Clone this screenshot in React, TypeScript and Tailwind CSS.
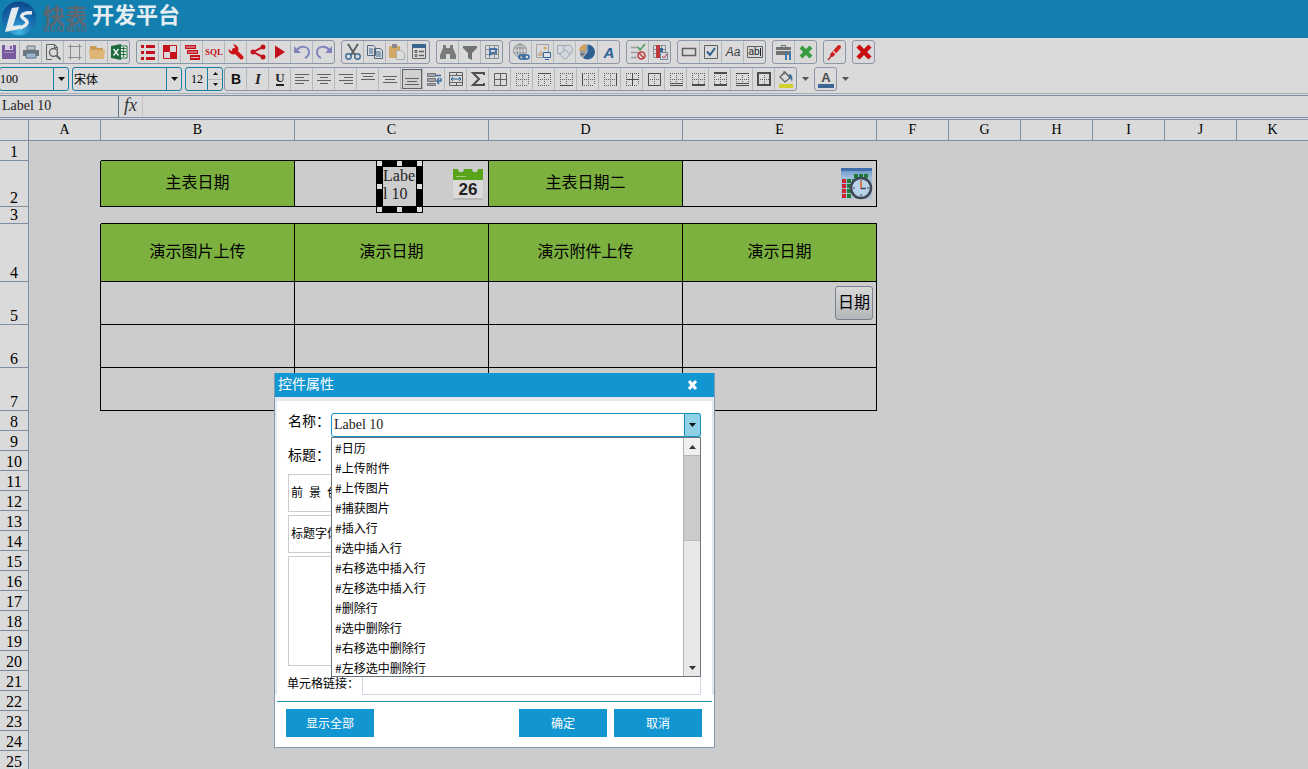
import React, { useState } from 'react';

interface IconProps {
  children: React.ReactNode;
}

const Icon: React.FC<IconProps> = ({ children }) => (
  <svg width="18" height="18" viewBox="0 0 18 18" fill="none" className="block" aria-hidden="true">
    {children}
  </svg>
);

interface Tool {
  name: string;
  icon: React.ReactNode;
  selected?: boolean;
}

const GRAY = '#5f6163';
const RED = '#c4121d';
const BLUE = '#2d5f93';

// 第一行工具栏
const fileTools: Tool[] = [
  { name: '保存', icon: <><path d="M2 2h14v14H2z" fill="#7a5a9e" /><path d="M5 2h8v5H5z" fill="#d6cfe0" /><path d="M10 3h2v3h-2zM4 10h10v1H4z" fill="#7a5a9e" /><path d="M4 9h10v1H4z" fill="#a58fc0" /></> },
  { name: '打印', icon: <><path d="M5 3h8v4H5z" fill="#b9c3cc" stroke="#6f7780" /><path d="M1 7h16v6H1z" fill="#6f7780" /><path d="M4 10h10v5H4z" fill="#9db4ca" stroke="#56708c" /></> },
  { name: '预览', icon: <><path d="M8 16.500H2.500v-15h8l3 3V7" stroke={GRAY} /><path d="M10.500 1.500v3h3" stroke={GRAY} /><circle cx="9.500" cy="9.500" r="4" stroke={GRAY} strokeWidth="1.400" /><path d="m12.500 12.500 4 4" stroke={GRAY} strokeWidth="2" /></> },
  { name: '页面设置', icon: <path d="M4.500 1v16M13.500 1v16M2 3.500h14M2 14.500h14" stroke="#8d8f92" /> },
  { name: '打开', icon: <><path d="M2 3h6l1 2h6v3H2z" fill="#c99a50" /><path d="M1 7h16l-1 9H2z" fill="#deb574" /></> },
  { name: '导出Excel', icon: <><path d="M9 3h8v12H9z" fill="#e2e6e2" stroke="#2b7246" /><path d="M11 5.500h5M11 8.500h5M11 11.500h5M13.500 4v10" stroke="#2b7246" /><path d="m1 3 10-2v16L1 15z" fill="#1f6b3c" /><path d="m3.500 6 5 6.500m0-6.500-5 6.500" stroke="#e6ece8" strokeWidth="1.500" /></> },
];

const dataTools: Tool[] = [
  { name: '列表', icon: <path d="M2 2h3v3H2zM7 2h9v3H7zM2 8h3v3H2zM7 8h9v3H7zM2 14h3v3H2zM7 14h9v3H7z" fill={RED} /> },
  { name: '分组', icon: <><path d="M2.500 2.500h13v13h-13z" stroke={RED} /><path d="M2 2h7v7H2zM9 9h7v7H9z" fill={RED} /></> },
  { name: '层级', icon: <><path d="M2 2h11v4H2zM4 7h11v4H4zM7 12h10v5H7z" fill={RED} /><path d="M3 4h9M5 9h9M8 14.500h8" stroke="#e7b3b5" /></> },
  { name: 'SQL', icon: <text x="9" y="12" textAnchor="middle" fontSize="9" fontWeight="700" fontFamily="Liberation Serif, serif" fill={RED}>SQL</text> },
  { name: '设置', icon: <><path d="m7 7 7.500 7.500" stroke="#cc1414" strokeWidth="4" strokeLinecap="round" /><path d="M6 1.500a5 5 0 1 1-4.500 4.500L4 8l3-1 1-3z" fill="#cc1414" /></> },
  { name: '分享', icon: <><path d="M14 4 4 9l10 5" stroke={RED} strokeWidth="2" /><circle cx="4" cy="9" r="2.500" fill={RED} /><circle cx="14" cy="4" r="2.500" fill={RED} /><circle cx="14" cy="14" r="2.500" fill={RED} /></> },
  { name: '运行', icon: <path d="M4 2.500 14 9 4 15.500z" fill={RED} /> },
  { name: '撤销', icon: <><path d="M4 7c3-5 12-4 12 2 0 3-2 5-4 6" stroke="#8284bd" strokeWidth="2" /><path d="M1 3v7h7z" fill="#8284bd" /></> },
  { name: '重做', icon: <><path d="M14 7C11 2 2 3 2 9c0 3 2 5 4 6" stroke="#8284bd" strokeWidth="2" /><path d="M17 3v7h-7z" fill="#8284bd" /></> },
];

const editTools: Tool[] = [
  { name: '剪切', icon: <><path d="m4 1 7 11M14 1 7 12" stroke={GRAY} strokeWidth="2" /><circle cx="4.500" cy="13.500" r="2.700" stroke="#3e6d96" strokeWidth="1.500" /><circle cx="13.500" cy="13.500" r="2.700" stroke="#3e6d96" strokeWidth="1.500" /></> },
  { name: '复制', icon: <><path d="M1.500 2.500h6l2 2v8h-8zM8.500 5.500h6l2 2v8h-8z" fill="#d9dbde" stroke="#53677c" /><path d="M3 6h4M3 8h4M3 10h4M10 9h5M10 11h5M10 13h5" stroke="#426e9b" /></> },
  { name: '粘贴', icon: <><path d="M1 3h11v12H1z" fill="#d3a864" /><path d="M4 1h5v4H4z" fill="#87898c" /><path d="M8.500 7.500h5l3 3v6h-8z" fill="#dcdcdc" stroke="#a9abad" /></> },
  { name: '属性', icon: <><path d="M2.500 2.500h13v13h-13z" stroke={GRAY} /><path d="M2 1h14v4H2z" fill="#38638e" /><path d="M5 7.500h2v2H5zM5 11.500h2v2H5z" stroke={GRAY} /><path d="M9 8.500h5M9 12.500h5" stroke={GRAY} strokeWidth="1.500" /></> },
];

const findTools: Tool[] = [
  { name: '查找', icon: <path d="M4 2h3v3h4V2h3v3l3 7v4h-6v-5H7v5H1v-4l3-7z" fill="#77797b" /> },
  { name: '筛选', icon: <path d="M2 3h14v2l-5 5v7l-4-2v-5L2 5z" fill="#6f7173" /> },
  { name: '冻结', icon: <><path d="M2.500 2.500h13v13h-13zM2 6.500h14M6.500 2v14M2 11.500h14M11.500 2v14" stroke="#8c8f93" /><path d="M6 5h8v6H9l-3 3z" fill="#4a76a5" /><path d="M8 7h4v2H8z" fill="#d8d8d8" /></> },
];

const insertTools: Tool[] = [
  { name: '超链接', icon: <><circle cx="8" cy="7.500" r="6.500" stroke="#8c8f93" /><ellipse cx="8" cy="7.500" rx="3" ry="6.500" stroke="#8c8f93" /><path d="M2 5h12M2 10h12M8 1v13" stroke="#8c8f93" /><rect x="7" y="12" width="6" height="4" rx="2" stroke="#2f659e" strokeWidth="1.500" /><rect x="11" y="12" width="6" height="4" rx="2" stroke="#2f659e" strokeWidth="1.500" /></> },
  { name: '图片', icon: <><path d="M2.500 1.500h12v13h-12z" stroke="#a0a2a5" /><circle cx="11" cy="5" r="1.500" fill="#d3a864" /><path d="m3 13 4-6 4 6z" fill="#c9b29a" /><path d="M9.500 9.500h7v5h-7z" fill="#dbe2e9" stroke="#2f659e" /><path d="M11 16.500h4" stroke="#2f659e" /></> },
  { name: '形状', icon: <><path d="M1.500 2.500h8v8h-8z" stroke="#9aa7b6" fill="#d5d8dc" /><circle cx="12" cy="6.500" r="4.500" stroke="#9aa7b6" fill="#d5d8dc" /><path d="m9 6.500 5 5-5 5-5-5z" stroke="#8fa0b3" fill="#d5d8dc" /></> },
  { name: '图表', icon: <><circle cx="9.500" cy="9" r="7.500" fill="#2d5f93" /><path d="M8 8H1a7 7 0 0 1 7-7z" fill="#d0a361" /><path d="M9 9H2a8 8 0 0 0 3 6z" fill="#77797b" /><path d="M9 1v8H1M9 9l-5 6" stroke="#dadada" /></> },
  { name: '艺术字', icon: <text x="9" y="15" textAnchor="middle" fontSize="15" fontWeight="700" fontStyle="italic" fontFamily="Liberation Sans, sans-serif" fill="#2d6199">A</text> },
];

const checkTools: Tool[] = [
  { name: '数据校验', icon: <><path d="M2 4.500h8M2 9.500h8M2 14.500h6" stroke="#9a9c9f" strokeWidth="1.500" /><path d="m9 4 2 3 5-6" stroke="#4c9a62" strokeWidth="1.500" /><circle cx="12.500" cy="12.500" r="3.500" stroke="#c23b3f" strokeWidth="1.500" /><path d="m10 10 5 5" stroke="#c23b3f" strokeWidth="1.500" /></> },
  { name: '条件格式', icon: <><path d="M2.500 2.500h12v12h-12zM2 6.500h13M2 10.500h13M6.500 2v13M10.500 2v13" stroke="#8c8f93" /><path d="M5 2h4v13H5z" fill="#bb3a40" /><path d="M9 5h3v4H9z" fill="#39689b" /><path d="M9.500 9.500h7v7h-7z" fill="#d5d8dc" stroke="#71869e" /><path d="m11 13 2 2 3-4" stroke="#bb3a40" /></> },
];

const controlTools: Tool[] = [
  { name: '按钮', icon: <path d="M2.500 5.500h13v7h-13z" stroke={GRAY} strokeWidth="1.500" /> },
  { name: '复选框', icon: <><path d="M2.500 2.500h13v13h-13z" stroke={GRAY} /><path d="m5 8.500 3 3.500 5-7" stroke="#2d5f93" strokeWidth="2" /></> },
  { name: '标签', icon: <text x="9" y="13" textAnchor="middle" fontSize="12" fontStyle="italic" fontFamily="Liberation Sans, sans-serif" fill="#3f4143">Aa</text> },
  { name: '文本框', icon: <><path d="M1.500 3.500h15v11h-15z" stroke={GRAY} /><text x="8" y="12" textAnchor="middle" fontSize="10" fontFamily="Liberation Sans, sans-serif" fill="#222">ab</text><path d="M14.500 5v8" stroke="#222" /></> },
];

const kitTools: Tool[] = [
  { name: '工具箱', icon: <><path d="M6 4V2h5v2h5v8H1V4z" fill="#707274" /><path d="M1 7.500h15" stroke="#dadada" /><path d="M7 3.500h3" stroke="#dadada" /><path d="M11 9v8M15 9v8" stroke="#4677a8" strokeWidth="2" /></> },
  { name: '删除控件', icon: <path d="m4 4 10 10M14 4 4 14" stroke="#3a9b3e" strokeWidth="4" /> },
];

const pinTools: Tool[] = [
  { name: '标记', icon: <><path d="m6 12 7-8" stroke="#d02020" strokeWidth="4" strokeLinecap="round" /><path d="m2 17 4-5" stroke="#a33" strokeWidth="1.500" /><path d="m7 8 3 3" stroke="#e6c9c9" strokeWidth="1.500" /></> },
];

const closeTools: Tool[] = [
  { name: '关闭', icon: <path d="m3 3 12 12M15 3 3 15" stroke="#c90f14" strokeWidth="4.500" /> },
];

const toolGroups = [fileTools, dataTools, editTools, findTools, insertTools, checkTools, controlTools, kitTools, pinTools, closeTools];

const lines = (d: string) => <path d={d} stroke={GRAY} />;

const dotted = (solid: string, bold?: string) => (
  <>
    <path d="M3 3.500h12M3 9.500h12M3 15.500h12M3.500 3v12M9.500 3v12M15.500 3v12" stroke={GRAY} strokeDasharray="1 1" />
    <path d={solid} stroke="#4b4d4f" />
    {bold && <path d={bold} stroke="#4b4d4f" strokeWidth="2" />}
  </>
);

const formatTools: Tool[] = [
  { name: '加粗', icon: <text x="9" y="14" textAnchor="middle" fontSize="14" fontWeight="700" fontFamily="Liberation Sans, sans-serif" fill="#111">B</text> },
  { name: '倾斜', icon: <text x="9" y="14" textAnchor="middle" fontSize="15" fontWeight="700" fontStyle="italic" fontFamily="Liberation Serif, serif" fill="#222">I</text> },
  { name: '下划线', icon: <><text x="9" y="12" textAnchor="middle" fontSize="13" fontWeight="700" fontFamily="Liberation Serif, serif" fill="#222">U</text><path d="M5 15h8" stroke="#222" strokeWidth="2" /></> },
  { name: '左对齐', icon: lines('M2 4.500h14M2 7.500h9M2 10.500h14M2 13.500h9') },
  { name: '水平居中', icon: lines('M2 4.500h14M5 7.500h8M2 10.500h14M5 13.500h8') },
  { name: '右对齐', icon: lines('M2 4.500h14M7 7.500h9M2 10.500h14M7 13.500h9') },
  { name: '顶端对齐', icon: lines('M2 3.500h14M4 6.500h10M2 9.500h14') },
  { name: '垂直居中', icon: lines('M2 6.500h14M4 9.500h10M2 12.500h14') },
  { name: '底端对齐', icon: lines('M2 8.500h14M4 11.500h10M2 14.500h14'), selected: true },
  { name: '自动换行', icon: <><path d="M2.500 3.500h8v3h-8zM2.500 8.500h8v3h-8zM2.500 13.500h8v2h-8z" fill="#a3a7ab" stroke="#74787c" /><path d="M11 5.500h5M16 8v3h-4m2-3-2 3 2 3" stroke="#3e6d9d" strokeWidth="1.500" /></> },
  { name: '合并单元格', icon: <><path d="M2.500 2.500h13v13h-13zM2 5.500h14M2 12.500h14M9.500 2v3.500M9.500 12.500v3" stroke={GRAY} /><path d="M4 9h10M6 7 4 9l2 2M12 7l2 2-2 2" stroke={BLUE} /></> },
  { name: '求和', icon: <path d="M15 5V3H4l6 6-6 6h11v-2" stroke="#4b4d4f" strokeWidth="2" /> },
  { name: '所有框线', icon: lines('M3.500 3.500h12v12h-12zM3 9.500h13M9.500 3v13') },
  { name: '无框线', icon: dotted('') },
  { name: '上框线', icon: dotted('M3 3.500h13') },
  { name: '下框线', icon: dotted('M3 15.500h13') },
  { name: '左框线', icon: dotted('M3.500 3v13') },
  { name: '右框线', icon: dotted('M15.500 3v13') },
  { name: '内部框线', icon: dotted('M9.500 3v13M3 9.500h13') },
  { name: '外侧框线', icon: dotted('M3.500 3.500h12v12h-12z') },
  { name: '双底框线', icon: dotted('M3 13.500h13M3 15.500h13') },
  { name: '粗底框线', icon: dotted('', 'M3 15h13') },
  { name: '上下框线', icon: dotted('', 'M3 3h13M3 15h13') },
  { name: '上框双下框线', icon: dotted('M3 3.500h13M3 13.500h13M3 15.500h13') },
  { name: '粗匣框线', icon: dotted('', 'M3 3h12v12H3z') },
  { name: '填充颜色', icon: <><path d="M2 14h14v4H2z" fill="#d2d02b" /><path d="m3 7 5-5 5 6-5 4z" stroke={GRAY} strokeWidth="1.300" /><path d="M7 5V1" stroke={GRAY} /><path d="M12 4c3 0 4 3 3 8-1-3-2-4-4-5z" fill="#456f9c" /></> },
];

const fontColorTools: Tool[] = [
  { name: '字体颜色', icon: <><text x="9" y="12" textAnchor="middle" fontSize="13" fontWeight="700" fontFamily="Liberation Sans, sans-serif" fill="#4b4d4f">A</text><path d="M1 14h16v4H1z" fill="#3c6594" /></> },
];

const ToolGroup: React.FC<{ tools: Tool[] }> = ({ tools }) => (
  <div className="flex h-6 shrink-0 overflow-hidden rounded-[3px] border border-[#8b97a6]">
    {tools.map(tool => (
      <button
        key={tool.name}
        type="button"
        title={tool.name}
        aria-label={tool.name}
        className="flex w-[22px] items-center justify-center border-r border-[#b4b9c0] last:w-[21px] last:border-r-0"
      >
        <span className={tool.selected ? 'border border-[#5f6163] bg-[#d0d0d0]' : ''}>
          <Icon>{tool.icon}</Icon>
        </span>
      </button>
    ))}
  </div>
);

const Arrow: React.FC<{ up?: boolean; small?: boolean; color?: string }> = ({ up, small, color = '#111' }) => (
  <svg width={small ? 5 : 7} height={small ? 3 : 4} viewBox="0 0 7 4" aria-hidden="true">
    <path d={up ? 'M0 4h7L3.500 0z' : 'M0 0h7L3.500 4z'} fill={color} />
  </svg>
);

interface ComboProps {
  label: string;
  options: string[];
  className: string;
}

const Combo: React.FC<ComboProps> = ({ label, options, className }) => (
  <div className={`relative h-6 shrink-0 rounded-[3px] border border-[#1a7ea6] ${className}`}>
    <select aria-label={label} className="block h-full w-full appearance-none bg-transparent outline-none">
      {options.map(o => <option key={o}>{o}</option>)}
    </select>
    <span className="pointer-events-none absolute inset-y-0 right-0 flex w-[15px] items-center justify-center border-l border-[#1a7ea6]">
      <Arrow />
    </span>
  </div>
);

const Logo = () => (
  <svg width="38" height="36" viewBox="0 0 38 36" fill="none" aria-hidden="true">
    <defs>
      <radialGradient id="ball" cx="0.5" cy="0.9" r="0.9">
        <stop offset="0" stopColor="#43b6e4" />
        <stop offset="0.45" stopColor="#1a76b8" />
        <stop offset="1" stopColor="#0d4688" />
      </radialGradient>
    </defs>
    <circle cx="19" cy="17.500" r="17" fill="url(#ball)" />
    <path d="m12 7 7-1-6 19 8-1-1 4-15 3 6-22z" fill="#e4e9ee" />
    <path d="M32 12c-6-1-11 1-10 4 1 2 6 3 5 6-1 3-4 4-7 5" stroke="#e4e9ee" strokeWidth="3.500" />
  </svg>
);

const CalendarIcon = () => (
  <svg width="32" height="34" viewBox="0 0 32 34" aria-label="日历" role="img">
    <rect x="1" y="12" width="30" height="21" rx="2" fill="#b9b9b9" />
    <rect x="1" y="12" width="30" height="19" rx="1" fill="#dadada" />
    <path d="M1 2h5l1 3h4l1-3h8l1 3h4l1-3h5v11H1z" fill="#58a51c" />
    <path d="M4 9.500h10" stroke="#9fcb7c" />
    <text x="16" y="28" textAnchor="middle" fontSize="17" fontWeight="700" fontFamily="Liberation Sans, sans-serif" fill="#222">26</text>
  </svg>
);

const ClockIcon = () => (
  <svg width="33" height="33" viewBox="0 0 33 33" aria-label="日期时间" role="img">
    <defs>
      <linearGradient id="sky" x1="0" y1="0" x2="0" y2="1">
        <stop offset="0" stopColor="#5f8fc4" />
        <stop offset="0.3" stopColor="#9dbbdb" />
        <stop offset="1" stopColor="#b4c3d2" />
      </linearGradient>
    </defs>
    <path d="M1 1h31v31H1z" fill="url(#sky)" />
    <path d="M1 1h31v3H1z" fill="#3f70ab" />
    <path d="M2 12h4v4H2zM2 17h4v4H2zM2 22h4v4H2zM2 27h4v4H2z" fill="#cf2430" />
    <path d="M7 12h4v4H7zM7 17h4v4H7zM7 22h4v4H7zM7 27h4v4H7zM12 12h3v4h-3zM14 7h4v4h-4zM19 7h4v4h-4zM24 7h4v4h-4z" fill="#1d7a35" />
    <circle cx="21" cy="21" r="10" fill="#b9d3ea" stroke="#3d4756" strokeWidth="2.500" />
    <path d="M21 13v2M21 27v2M13 21h2M27 21h2" stroke="#3d4756" />
    <path d="M21 14v8" stroke="#d27a4c" strokeWidth="2" />
    <path d="M21 21.500h5" stroke="#3d4756" strokeWidth="1.500" />
  </svg>
);

const handles = [
  'justify-self-start', 'justify-self-center', 'justify-self-end',
  'justify-self-start', 'invisible', 'justify-self-end',
  'justify-self-start', 'justify-self-center', 'justify-self-end',
];

const LabelControl = () => (
  <div className="absolute -top-px left-[81px] z-10 h-[53px] w-[47px] border-[7px] border-black bg-[#ccc] text-left">
    <p className="w-[33px] break-all font-['Liberation_Serif','Noto_Sans_CJK_SC',serif] text-base leading-[18px] text-[#222]">Label 10</p>
    <div className="absolute -inset-1.5 grid grid-cols-3 content-between">
      {handles.map((pos, i) => <i key={i} className={`h-[5px] w-[5px] bg-[#dcdcdc] ${pos}`} />)}
    </div>
  </div>
);

const columns = ['A', 'B', 'C', 'D', 'E', 'F', 'G', 'H', 'I', 'J', 'K'];

const rowHeights: Record<number, string> = {
  2: 'h-[46px]',
  3: 'h-[17px]',
  4: 'h-[58px]',
  5: 'h-[43px]',
  6: 'h-[43px]',
  7: 'h-[43px]',
};

const cellTexts: Record<string, string> = {
  B2: '主表日期',
  D2: '主表日期二',
  B4: '演示图片上传',
  C4: '演示日期',
  D4: '演示附件上传',
  E4: '演示日期',
};

const cellControls: Record<string, React.ReactNode> = {
  C2: (
    <div className="flex justify-end pr-1">
      <LabelControl />
      <CalendarIcon />
    </div>
  ),
  E2: <div className="flex justify-end pr-[3px]"><ClockIcon /></div>,
  E5: (
    <div className="flex justify-end pr-[3px]">
      <button type="button" className="h-[34px] w-[38px] rounded-[3px] border border-[#78838f] bg-linear-to-b from-[#d8d8d8] to-[#b4b7ba] pb-1">日期</button>
    </div>
  ),
};

// 表格区域的右、下边框，相邻单元格共用一条线
const cellBorder = (row: number, col: number) => {
  const inTable = row === 2 || (row >= 4 && row <= 7);
  const right = inTable && col <= 4 ? 'border-r border-r-black' : '';
  const bottom = row <= 7 && col >= 1 && col <= 4 ? 'border-b border-b-black' : '';
  return `${right} ${bottom}`;
};

const Sheet = () => (
  <div className="mt-px min-h-0 flex-1 overflow-hidden border-t border-[#7f8fa3] bg-[#ccc]">
    <table className="w-full min-w-[1308px] table-fixed border-separate border-spacing-0 text-base leading-4">
      <colgroup>
        <col className="w-[29px]" />
        <col className="w-[72px]" />
        <col className="w-[194px]" />
        <col className="w-[194px]" />
        <col className="w-[194px]" />
        <col className="w-[194px]" />
        <col className="w-[72px]" />
        <col className="w-[72px]" />
        <col className="w-[72px]" />
        <col className="w-[72px]" />
        <col className="w-[72px]" />
        <col />
      </colgroup>
      <thead className="bg-[#dadada] font-['Liberation_Serif',serif] text-sm">
        <tr className="h-[21px]">
          <th className="border-r border-b border-[#7f8fa3]" aria-label="全选" />
          {columns.map(c => (
            <th key={c} scope="col" className="border-r border-b border-[#7f8fa3] font-normal last:border-r-0">{c}</th>
          ))}
        </tr>
      </thead>
      <tbody>
        {Array.from({ length: 25 }, (_, i) => i + 1).map(row => (
          <tr key={row} className={rowHeights[row] ?? 'h-5'}>
            <th scope="row" className="border-r border-b border-[#7f8fa3] bg-[#dadada] pb-px align-bottom font-['Liberation_Serif',serif] leading-[15px] font-normal">{row}</th>
            {columns.map((c, col) => {
              const key = `${c}${row}`;
              return (
                <td key={c} className={`relative text-center ${cellBorder(row, col)} ${cellTexts[key] ? 'bg-[#7cb13f] pb-1.5' : ''}`}>
                  {cellTexts[key] ?? cellControls[key]}
                </td>
              );
            })}
          </tr>
        ))}
      </tbody>
    </table>
  </div>
);

const controlNames = [
  '#日历', '#上传附件', '#上传图片', '#捕获图片', '#插入行', '#选中插入行',
  '#右移选中插入行', '#左移选中插入行', '#删除行', '#选中删除行', '#右移选中删除行', '#左移选中删除行',
];

const ControlDialog: React.FC<{ onClose: () => void }> = ({ onClose }) => {
  const [name, setName] = useState('Label 10');
  const [listOpen, setListOpen] = useState(true);

  return (
    <div role="dialog" aria-label="控件属性" className="absolute top-[373px] left-[274px] z-20 w-[441px] border border-t-0 border-[#8499ad] bg-white text-xs">
      <div className="flex h-6 items-center justify-between bg-[#1296d1] pr-4 pl-[3px] text-sm text-white">
        <h2 className="pb-1">控件属性</h2>
        <button type="button" aria-label="关闭" onClick={onClose}>
          <svg width="11" height="10" viewBox="0 0 11 10"><path d="m2 1 7 8M9 1 2 9" stroke="#fff" strokeWidth="3" /></svg>
        </button>
      </div>
      <div className="border-x-2 border-t-4 border-[#e4e8f1] px-[11px] pt-3">
        <div className="relative flex h-6">
          <label htmlFor="control-name" className="w-[43px] shrink-0 text-sm leading-[14px]">名称：</label>
          <input
            id="control-name"
            role="combobox"
            aria-expanded={listOpen}
            aria-controls="control-list"
            value={name}
            onChange={e => setName(e.target.value)}
            className="min-w-0 flex-1 rounded-l-[3px] border border-[#1a8fc0] px-0.5 font-['Liberation_Serif',serif] text-sm text-[#222] outline-none"
          />
          <button
            type="button"
            aria-label="展开"
            onClick={() => setListOpen(!listOpen)}
            className="flex w-4 items-center justify-center rounded-r-[3px] border border-l-0 border-[#1a8fc0] bg-[#8fd2e6]"
          >
            <Arrow />
          </button>
          {listOpen && (
            <div className="absolute top-6 right-0 left-[43px] z-10 flex h-60 border border-[#6c7780] bg-white">
              <ul id="control-list" role="listbox" className="flex-1 overflow-hidden pl-[3px] leading-5">
                {controlNames.map(item => (
                  <li key={item} role="option" aria-selected={item === name} onClick={() => setName(item)}>{item}</li>
                ))}
              </ul>
              <div className="flex w-[17px] flex-col border-l border-[#b5b5b8] bg-[#e8e8e8]">
                <span className="flex h-[17px] items-center justify-center bg-[#f0f0f0]"><Arrow up color="#333" /></span>
                <span className="h-[86px] border-y border-[#b8b8b8] bg-[#cbcbcb]" />
                <span className="mt-auto flex h-[17px] items-center justify-center"><Arrow color="#333" /></span>
              </div>
            </div>
          )}
        </div>
        <div className="mt-2.5 flex h-6">
          <label htmlFor="control-title" className="w-[43px] shrink-0 text-sm leading-[14px]">标题：</label>
          <input id="control-title" className="min-w-0 flex-1 border border-[#ccc]" />
        </div>
        <div className="mt-[3px] h-[38px] border border-[#ccc] pl-0.5 leading-[34px]">前&ensp;景&ensp;色：</div>
        <div className="mt-[3px] h-[38px] border border-[#ccc] pl-0.5 leading-[34px]">标题字体：</div>
        <div className="mt-[3px] h-[110px] border border-[#ccc]" />
        <div className="mt-[9px] flex h-5">
          <label htmlFor="control-link" className="-ml-px w-[75px] shrink-0 leading-4 whitespace-nowrap">单元格链接：</label>
          <input id="control-link" className="h-5 min-w-0 flex-1 border border-[#d9d4e4] outline-none" />
        </div>
      </div>
      <div className="mx-0.5 mt-1.5 flex gap-[7px] border-t border-[#2590b0] pt-[7px] pr-2.5 pb-2.5 pl-[9px] text-white">
        <button type="button" className="mr-auto h-7 w-[88px] bg-[#1296d1]">显示全部</button>
        <button type="button" className="h-7 w-[88px] bg-[#1296d1]" onClick={onClose}>确定</button>
        <button type="button" className="h-7 w-[88px] bg-[#1296d1]" onClick={onClose}>取消</button>
      </div>
    </div>
  );
};

const App = () => {
  const [dialogOpen, setDialogOpen] = useState(true);
  const [size, setSize] = useState(12);

  return (
    <div className="relative flex h-screen flex-col overflow-hidden bg-[#dadada] font-['Noto_Sans_CJK_SC',sans-serif] text-black">
      <header className="flex h-[38px] shrink-0 items-center bg-[#127fae]">
        <Logo />
        <div className="flex w-[54px] flex-col items-center font-bold text-[#5f6772]">
          <span className="text-[22px] leading-[22px]">快表</span>
          <span className="font-['Liberation_Serif',serif] text-[8px] leading-[10px] whitespace-nowrap">KUAI BIAO</span>
        </div>
        <h1 className="pb-1.5 font-['Liberation_Serif','Noto_Sans_CJK_SC',serif] text-[22px] leading-8 font-bold text-[#e3edf2]">开发平台</h1>
      </header>

      <div className="flex shrink-0 flex-col gap-[3px] border-b border-[#a4adb9] pt-0.5 pb-0.5">
        <div className="-ml-[3px] flex gap-1.5">
          {toolGroups.map((tools, i) => <ToolGroup key={i} tools={tools} />)}
        </div>
        <div className="-ml-px flex items-center">
          <Combo label="缩放" options={['100']} className="w-[70px] font-['Liberation_Serif',serif] text-xs" />
          <Combo label="字体" options={['宋体']} className="ml-[3px] w-[110px] pl-px text-xs" />
          <div className="ml-[3px] flex h-6 w-[38px] shrink-0 rounded-[3px] border border-[#1a7ea6]">
            <input
              aria-label="字号"
              value={size}
              onChange={e => setSize(Number(e.target.value))}
              className="min-w-0 flex-1 pr-1 text-right font-['Liberation_Serif',serif] text-xs outline-none"
            />
            <div className="flex w-[15px] flex-col border-l border-[#1a7ea6]">
              <button type="button" aria-label="增大字号" onClick={() => setSize(size + 1)} className="flex flex-1 items-center justify-center border-b border-[#b4b9c0]"><Arrow up small /></button>
              <button type="button" aria-label="减小字号" onClick={() => setSize(size - 1)} className="flex flex-1 items-center justify-center"><Arrow small /></button>
            </div>
          </div>
          <div className="ml-px"><ToolGroup tools={formatTools} /></div>
          <button type="button" aria-label="选择填充颜色" className="flex h-6 w-[17px] items-center justify-center"><Arrow color="#55585b" /></button>
          <ToolGroup tools={fontColorTools} />
          <button type="button" aria-label="选择字体颜色" className="flex h-6 w-[17px] items-center justify-center"><Arrow color="#55585b" /></button>
        </div>
      </div>

      <div className="mt-px flex h-[23px] shrink-0 border-y border-[#7f8fa3]">
        <input aria-label="名称框" defaultValue="Label 10" className="w-[119px] border-r border-[#68788a] pb-0.5 pl-0.5 font-['Liberation_Serif',serif] text-sm text-[#222] outline-none" />
        <button type="button" aria-label="插入函数" className="w-6 border-r border-[#c4c4c4] pb-1 font-['Liberation_Serif',serif] text-lg leading-4 text-[#333] italic">fx</button>
        <input aria-label="编辑栏" className="min-w-0 flex-1 outline-none" />
      </div>

      <Sheet />

      {dialogOpen && <ControlDialog onClose={() => setDialogOpen(false)} />}
    </div>
  );
};

export default App;
